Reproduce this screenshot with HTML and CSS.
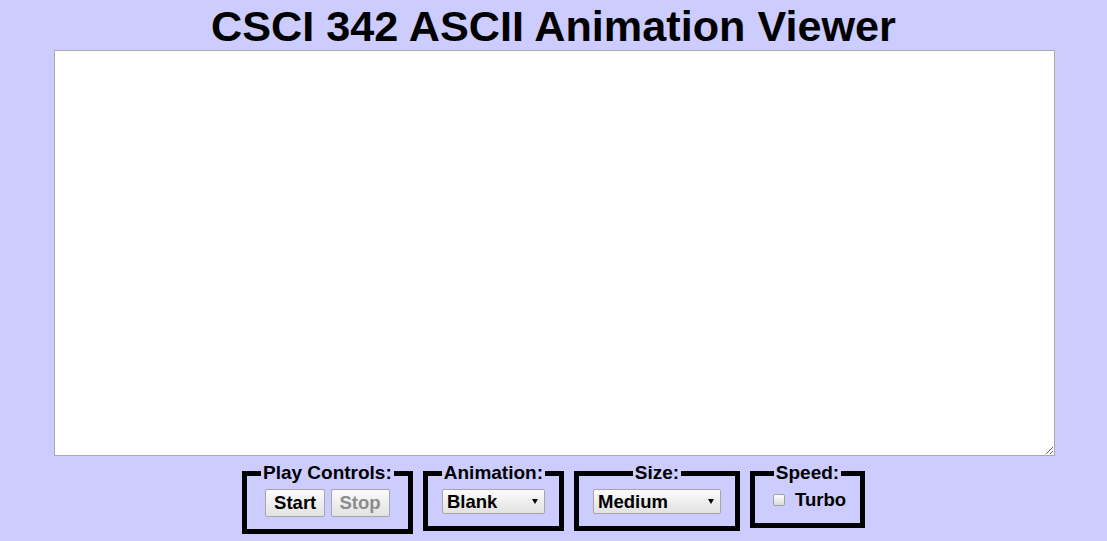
FILE: index.html
```html
<!DOCTYPE html>
<html>
<head>
<meta charset="utf-8">
<title>CSCI 342 ASCII Animation Viewer</title>
<link rel="stylesheet" href="styles.css">
</head>
<body>
<h1 class="title">CSCI 342 ASCII Animation Viewer</h1>
<textarea class="stage"></textarea>
<div class="controls">
  <fieldset class="group">
    <legend class="group-label">Play Controls:</legend>
    <button class="btn">Start</button>
    <button class="btn" disabled>Stop</button>
  </fieldset>
  <fieldset class="group">
    <legend class="group-label">Animation:</legend>
    <span class="select-wrap select-anim">
      <select class="select">
        <option>Blank</option>
        <option>Exercise</option>
        <option>Juggler</option>
        <option>Bike</option>
        <option>Dive</option>
        <option>Custom</option>
      </select>
    </span>
  </fieldset>
  <fieldset class="group">
    <legend class="group-label">Size:</legend>
    <span class="select-wrap select-size">
      <select class="select">
        <option>Tiny</option>
        <option>Small</option>
        <option selected>Medium</option>
        <option>Large</option>
        <option>Extra Large</option>
        <option>XXL</option>
      </select>
    </span>
  </fieldset>
  <fieldset class="group">
    <legend class="group-label">Speed:</legend>
    <label class="check"><span class="box"></span>Turbo</label>
  </fieldset>
</div>
</body>
</html>
```
FILE: styles.css
```css
html, body {
  margin: 0;
  padding: 0;
  background: #ccccff;
  font-family: "Liberation Sans", Arial, sans-serif;
}

.title {
  margin: 3px 0 0;
  height: 47px;
  line-height: 46px;
  font-size: 43.2px;
  font-weight: bold;
  text-align: center;
  color: #000;
}

.stage {
  display: block;
  box-sizing: border-box;
  width: 1001px;
  height: 406px;
  margin: 0 0 0 54px;
  padding: 2px;
  border: 1px solid #a9a9a9;
  background: #fff;
  resize: both;
  font-family: "Liberation Mono", monospace;
  font-size: 13px;
}

.controls {
  display: flex;
  justify-content: center;
  align-items: flex-start;
  gap: 10px;
  margin-top: 6px;
}

.group {
  margin: 0;
  padding: 0 14px 12px;
  border: 5px solid #000;
  text-align: center;
  font-size: 19px;
  font-weight: bold;
  min-width: 0;
}

.group-label {
  margin: 0 auto;
  padding: 0 2px;
  font-size: 19px;
  line-height: 22px;
  font-weight: bold;
}

.btn {
  box-sizing: border-box;
  height: 28px;
  margin: 5px 0 0;
  padding: 0 8px;
  font-family: "Liberation Sans", Arial, sans-serif;
  font-size: 18.5px;
  font-weight: bold;
  color: #000;
  border: 1px solid #a6a6a6;
  border-radius: 2px;
  background: linear-gradient(#fbfbfb, #e2e2e2);
  vertical-align: top;
}

.btn:disabled {
  color: #8c8c8c;
}

.btn + .btn {
  margin-left: 0;
}

.select-wrap {
  position: relative;
  display: inline-block;
  margin-top: 5px;
  vertical-align: top;
}

.select {
  display: block;
  box-sizing: border-box;
  height: 25px;
  padding: 0 20px 0 4px;
  -webkit-appearance: none;
  appearance: none;
  font-family: "Liberation Sans", Arial, sans-serif;
  font-size: 18.5px;
  font-weight: bold;
  color: #000;
  border: 1px solid #a6a6a6;
  border-radius: 2px;
  background: linear-gradient(#fbfbfb, #e2e2e2);
}

.select-anim .select { width: 103px; }
.select-size .select { width: 128px; }

.select-wrap::after {
  content: "";
  position: absolute;
  right: 7px;
  top: 10px;
  border-left: 3px solid transparent;
  border-right: 3px solid transparent;
  border-top: 5px solid #000;
  pointer-events: none;
}

.check {
  display: inline-flex;
  align-items: center;
  margin-top: 5px;
  font-size: 18.5px;
  font-weight: bold;
}

.box {
  box-sizing: border-box;
  width: 12px;
  height: 12px;
  margin: 0 10px 0 4px;
  border: 1px solid #a0a0a0;
  border-radius: 2px;
  background: linear-gradient(#fcfcfc, #dcdcdc);
}
```
